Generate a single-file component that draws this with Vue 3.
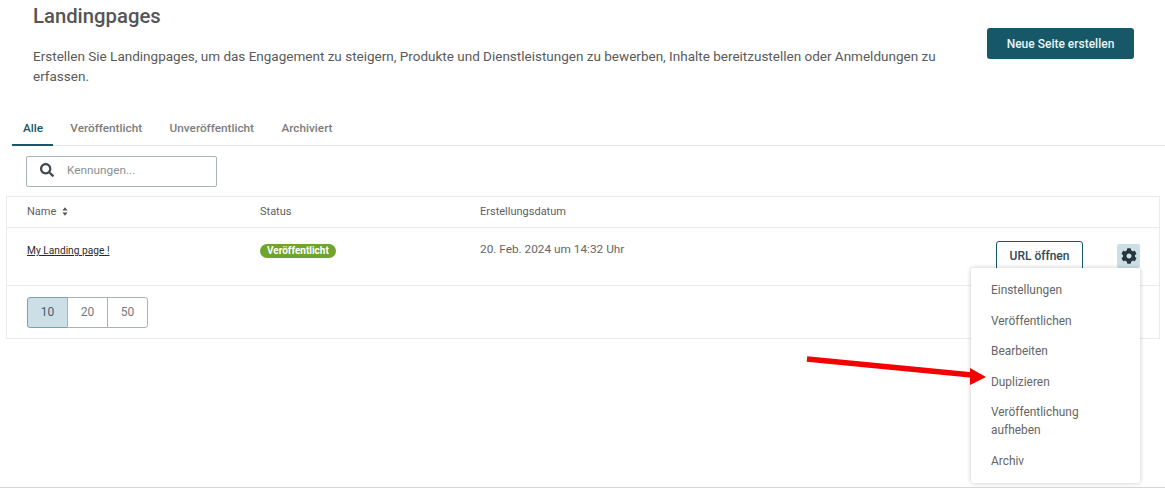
<script setup>
const tabs = ['Alle', 'Veröffentlicht', 'Unveröffentlicht', 'Archiviert']
const sizes = [10, 20, 50]
const menu = ['Einstellungen', 'Veröffentlichen', 'Bearbeiten', 'Duplizieren', 'Veröffentlichung aufheben', 'Archiv']
</script>

<template>
  <div class="page">
    <header class="head">
      <div class="intro">
        <h1>Landingpages</h1>
        <p>Erstellen Sie Landingpages, um das Engagement zu steigern, Produkte und Dienstleistungen zu bewerben, Inhalte bereitzustellen oder Anmeldungen zu erfassen.</p>
      </div>
      <button class="primary">Neue Seite erstellen</button>
    </header>

    <nav class="tabs">
      <span v-for="(t, i) in tabs" :key="t" class="tab" :class="{ active: i === 0 }">{{ t }}</span>
    </nav>

    <div class="search">
      <svg width="14" height="14" viewBox="0 0 512 512"><path fill="#3f4a50" d="M505 442.700 405.300 343c-4.500-4.500-10.600-7-17-7H372c27.600-35.300 44-79.700 44-128C416 93.100 322.900 0 208 0S0 93.100 0 208s93.100 208 208 208c48.300 0 92.700-16.400 128-44v16.300c0 6.400 2.500 12.500 7 17l99.700 99.700c9.400 9.400 24.600 9.400 33.900 0l28.300-28.300c9.400-9.400 9.400-24.600.1-34zM208 336c-70.700 0-128-57.200-128-128 0-70.700 57.200-128 128-128 70.700 0 128 57.200 128 128 0 70.700-57.200 128-128 128z"/></svg>
      <span>Kennungen...</span>
    </div>

    <section class="table">
      <div class="row thead">
        <div class="c-name">Name
          <svg width="6" height="9" viewBox="0 0 7 10"><path fill="#555" d="M3.500 0 6.500 3.800H.5zM3.500 10 .5 6.200h6z"/></svg>
        </div>
        <div class="c-status">Status</div>
        <div class="c-date">Erstellungsdatum</div>
      </div>
      <div class="row tbody">
        <div class="c-name link"><a>My Landing page !</a></div>
        <div class="c-status"><span class="badge">Veröffentlicht</span></div>
        <div class="c-date date">20. Feb. 2024 um 14:32 Uhr</div>
        <div class="actions">
          <button class="outline">URL öffnen</button>
          <span class="gear">
            <svg width="16" height="16" viewBox="0 0 512 512"><path fill="#26343c" d="M487.400 315.700l-42.600-24.600c4.300-23.200 4.300-47 0-70.200l42.600-24.600c4.900-2.800 7.100-8.600 5.500-14-11.100-35.600-30-67.800-54.700-94.600-3.800-4.100-10-5.100-14.800-2.300L380.800 110c-17.900-15.400-38.500-27.300-60.800-35.100V25.800c0-5.600-3.900-10.500-9.400-11.700-36.700-8.200-74.300-7.800-109.200 0-5.500 1.200-9.400 6.100-9.400 11.700V75c-22.200 7.900-42.800 19.800-60.800 35.100L88.700 85.500c-4.900-2.800-11-1.900-14.800 2.300-24.700 26.700-43.600 58.900-54.700 94.600-1.700 5.400.6 11.200 5.500 14L67.300 221c-4.300 23.200-4.300 47 0 70.200l-42.600 24.600c-4.900 2.800-7.100 8.600-5.500 14 11.100 35.600 30 67.800 54.700 94.600 3.800 4.100 10 5.100 14.800 2.300l42.600-24.600c17.900 15.400 38.500 27.300 60.800 35.100v49.200c0 5.600 3.900 10.500 9.400 11.700 36.700 8.200 74.300 7.800 109.200 0 5.500-1.200 9.400-6.100 9.400-11.700v-49.200c22.200-7.900 42.800-19.800 60.800-35.100l42.600 24.600c4.900 2.800 11 1.900 14.800-2.300 24.700-26.700 43.600-58.900 54.700-94.600 1.500-5.500-.7-11.300-5.600-14.100zM256 336c-44.100 0-80-35.900-80-80s35.900-80 80-80 80 35.900 80 80-35.900 80-80 80z"/></svg>
          </span>
        </div>
      </div>
      <div class="tfoot">
        <div class="pager">
          <span v-for="(s, i) in sizes" :key="s" class="size" :class="{ on: i === 0 }">{{ s }}</span>
        </div>
      </div>
    </section>

    <ul class="menu">
      <li v-for="m in menu" :key="m">{{ m }}</li>
    </ul>

    <svg class="arrow" width="190" height="40" viewBox="0 0 190 40">
      <path d="M2 3 167 19" stroke="#f40000" stroke-width="5.500" fill="none"/>
      <path d="M165 12 181 21 165 29z" fill="#f40000"/>
    </svg>

    <div class="baseline"></div>
  </div>
</template>

<style>
html, body { margin: 0; background: #fff; }
</style>

<style scoped>
.page {
  position: relative;
  width: 1165px;
  height: 488px;
  overflow: hidden;
  box-sizing: border-box;
  font-family: Roboto, "Liberation Sans", sans-serif;
  color: #5c5c5c;
}
.head {
  display: flex;
  align-items: flex-start;
  justify-content: space-between;
  padding: 4px 31px 0 33px;
  height: 116px;
  box-sizing: border-box;
}
.intro { width: 920px; }
h1 {
  margin: 0;
  font-size: 20.300px;
  line-height: 24px;
  font-weight: 500;
  color: #555;
}
.intro p {
  margin: 18px 0 0;
  font-size: 13.500px;
  line-height: 20px;
  color: #5a5a5a;
}
.primary {
  margin-top: 24px;
  width: 147px;
  height: 31px;
  border: 0;
  border-radius: 3px;
  background: #175868;
  color: #e8f4f6;
  font: 500 12px Roboto, sans-serif;
}
.tabs {
  display: flex;
  height: 29px;
  margin-left: 12px;
  border-bottom: 1px solid #e3e6e8;
  box-sizing: content-box;
}
.tab {
  padding: 0 13.750px;
  line-height: 25px;
  font-size: 11.750px;
  font-weight: 500;
  color: #7d7d7d;
  box-sizing: border-box;
}
.tab.active {
  padding: 0 10px 0 11px;
  color: #175868;
  border-bottom: 2px solid #175868;
  height: 30px;
  margin-right: 3.500px;
}
.search {
  display: flex;
  align-items: center;
  gap: 13px;
  margin: 10px 0 0 26px;
  width: 191px;
  height: 31px;
  padding: 0 0 3px 13px;
  box-sizing: border-box;
  border: 1px solid #a9b2b7;
  border-radius: 2px;
  font-size: 11.800px;
  color: #8a8f92;
}
.table {
  margin: 9px 5px 0 6px;
  border: 1px solid #e9ebec;
  font-size: 11px;
}
.row { display: flex; position: relative; border-bottom: 1px solid #e9ebec; }
.thead { height: 31px; padding-bottom: 2px; box-sizing: border-box; align-items: center; color: #5e5e5e; }
.tbody { height: 57px; align-items: flex-start; }
.c-name { width: 253px; padding-left: 20px; box-sizing: border-box; display: flex; align-items: center; gap: 6px; }
.c-status { width: 220px; }
.tbody > div { padding-top: 16px; }
.tbody > .link { padding-top: 17px; }
.tbody > .date { padding-top: 14px; }
.tbody a { color: #2b2b2b; text-decoration: underline; font-size: 10.200px; }
.badge {
  display: inline-block;
  height: 14px;
  line-height: 14px;
  padding: 0 7px;
  border-radius: 7px;
  background: #6fa52a;
  color: #fff;
  font-size: 10px;
  font-weight: 700;
}
.date { font-size: 11.800px; color: #666; }
.tbody > .actions {
  position: absolute;
  top: 0;
  left: 989px;
  display: flex;
  align-items: flex-start;
  gap: 34px;
  padding-top: 13px;
}
.outline {
  width: 87px;
  height: 30px;
  background: #fff;
  border: 1px solid #175868;
  border-radius: 3px;
  color: #2f4a55;
  font: 500 12px Roboto, sans-serif;
}
.gear {
  width: 23px;
  height: 24px;
  margin-top: 3px;
  background: #ccdfe7;
  border-radius: 2px;
  display: flex;
  align-items: center;
  justify-content: center;
}
.tfoot { height: 52px; padding: 11px 0 0 20px; box-sizing: border-box; }
.pager { display: inline-flex; height: 31px; }
.size {
  width: 41px;
  box-sizing: border-box;
  border: 1px solid #a9b2b7;
  margin-left: -1px;
  text-align: center;
  line-height: 29px;
  font-size: 12px;
  color: #75797c;
}
.size:first-child { margin-left: 0; border-radius: 3px 0 0 3px; }
.size:last-child { border-radius: 0 3px 3px 0; }
.size.on { background: #ccdfe7; border-color: #7ba0b0; color: #41606d; }
.menu {
  position: absolute;
  top: 268px;
  left: 971px;
  width: 169px;
  height: 215px;
  box-sizing: border-box;
  margin: 0;
  padding: 6.800px 0 0 20px;
  list-style: none;
  background: #fff;
  border-radius: 3px;
  box-shadow: 0 0 5px rgba(0, 0, 0, 0.22);
  font-size: 11.900px;
  color: #666;
}
.menu li { padding: 6.250px 30px 6.250px 0; line-height: 18px; }
.arrow { position: absolute; left: 805px; top: 356px; }
.baseline { position: absolute; left: 0; right: 0; bottom: 0; height: 1px; background: #d5d5d5; }
</style>
